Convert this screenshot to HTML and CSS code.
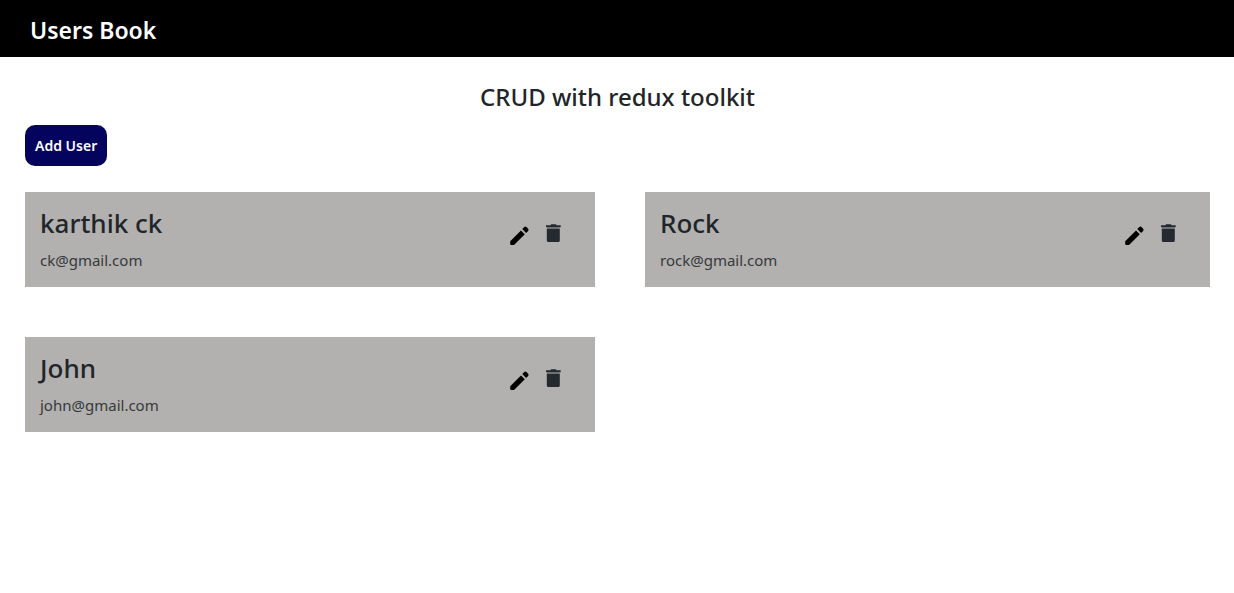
FILE: index.html
```
<!DOCTYPE html>
<html lang="en">
<head>
<meta charset="utf-8">
<title>Users Book</title>
<link rel="stylesheet" href="styles.css">
</head>
<body>
<svg class="sprite" aria-hidden="true">
<symbol id="edit" viewBox="0 0 24 24"><path d="M3.200 17.200 14 6.400l3.800 3.800L7 21H4.200a1 1 0 0 1-1-1zM15.300 5.100l2-2a1.600 1.600 0 0 1 2.200 0l1.600 1.600a1.600 1.600 0 0 1 0 2.200l-2 2z"/></symbol>
<symbol id="trash" viewBox="0 0 24 24"><path d="M5 3.300h4.500L10 2.300h5l.5 1h4.200v2H5z"/><path opacity=".4" d="M6 5.300h12.700v1.400H6z"/><path d="M5.800 6.700h13v11.800a1.600 1.600 0 0 1-1.600 1.600H7.400a1.600 1.600 0 0 1-1.600-1.600z"/></symbol>
</svg>
<header class="navbar"><h1 class="brand">Users Book</h1></header>
<main class="page">
<h2 class="title">CRUD with redux toolkit</h2>
<button class="add" type="button">Add User</button>
<section class="users">
<article class="card">
<div class="info"><h3 class="name">karthik ck</h3><p class="email">ck@gmail.com</p></div>
<div class="actions"><button class="icon edit" type="button" aria-label="Edit karthik ck"><svg><use href="#edit"/></svg></button><button class="icon delete" type="button" aria-label="Delete karthik ck"><svg><use href="#trash"/></svg></button></div>
</article>
<article class="card">
<div class="info"><h3 class="name">Rock</h3><p class="email">rock@gmail.com</p></div>
<div class="actions"><button class="icon edit" type="button" aria-label="Edit Rock"><svg><use href="#edit"/></svg></button><button class="icon delete" type="button" aria-label="Delete Rock"><svg><use href="#trash"/></svg></button></div>
</article>
<article class="card">
<div class="info"><h3 class="name">John</h3><p class="email">john@gmail.com</p></div>
<div class="actions"><button class="icon edit" type="button" aria-label="Edit John"><svg><use href="#edit"/></svg></button><button class="icon delete" type="button" aria-label="Delete John"><svg><use href="#trash"/></svg></button></div>
</article>
</section>
</main>
</body>
</html>
```

FILE: styles.css
```
* { box-sizing: border-box; }
body { margin: 0; background: #fff; color: #212529; font-family: "Segoe UI", "Noto Sans", sans-serif; }
h1, h2, h3, p { margin: 0; }
.sprite { display: none; }
.navbar { padding: 15px 30px 12px; background: #000; color: #fff; }
.brand { font-size: 23px; line-height: 30px; font-weight: 600; }
.page { padding: 25px 24px 25px 25px; }
.title { font-size: 24px; line-height: 30px; font-weight: 500; text-align: center; }
.add { display: block; margin-top: 13px; height: 41px; padding: 0 10px; border: 0; border-radius: 10px; background: #04045f; color: #fff; font: 600 14px/20px "Segoe UI", "Noto Sans", sans-serif; }
.users { display: grid; grid-template-columns: 570fr 565fr; gap: 50px; margin-top: 26px; }
.card { display: flex; justify-content: space-between; padding: 15px; background: #b2b1af; }
.name { font-size: 26px; line-height: 32px; font-weight: 500; }
.email { margin-top: 10px; font-size: 15px; line-height: 23px; color: #36393c; }
.actions { display: flex; align-items: flex-start; gap: 10px; padding: 15px 15px 0 0; }
.icon { display: block; padding: 0; border: 0; background: none; color: #252a30; }
.icon svg { display: block; width: 24px; height: 24px; fill: currentColor; }
.edit { color: #000; margin-top: 2px; }
```
